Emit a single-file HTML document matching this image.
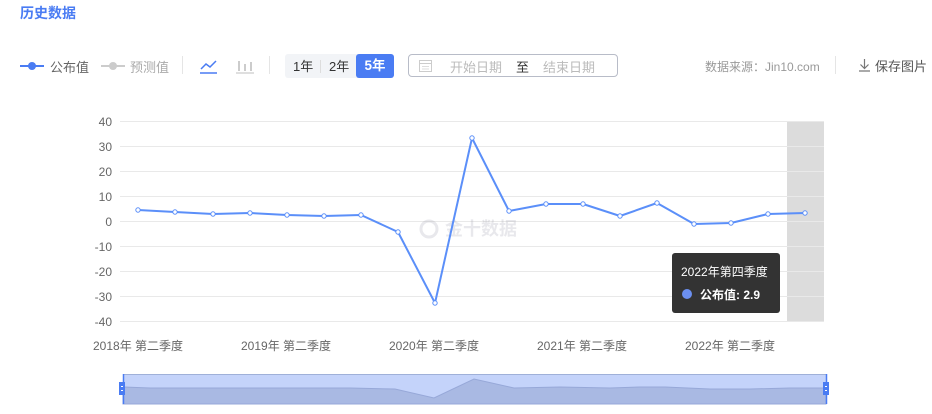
<!DOCTYPE html>
<html><head><meta charset="utf-8">
<style>
*{margin:0;padding:0;box-sizing:border-box}
body{width:932px;height:414px;background:#fff;font-family:"Liberation Sans","Noto Sans CJK SC",sans-serif;position:relative;overflow:hidden;color:#333}
.a{position:absolute;white-space:nowrap}
</style></head><body>
<div class="a" style="left:20px;top:3px;font-size:14px;font-weight:bold;color:#4a7cf3">历史数据</div>

<svg class="a" style="left:20px;top:60px" width="24" height="12"><line x1="0" y1="6" x2="24" y2="6" stroke="#4a7cf3" stroke-width="2"/><circle cx="12" cy="6" r="4" fill="#4a7cf3"/></svg>
<div class="a" style="left:50px;top:57px;font-size:13px;color:#666">公布值</div>
<svg class="a" style="left:101px;top:60px" width="24" height="12"><line x1="0" y1="6" x2="24" y2="6" stroke="#ccc" stroke-width="2"/><circle cx="12" cy="6" r="4" fill="#ccc"/></svg>
<div class="a" style="left:130px;top:57px;font-size:13px;color:#aaa">预测值</div>
<div class="a" style="left:182px;top:56px;width:1px;height:18px;background:#e5e5e5"></div>
<svg class="a" style="left:200px;top:58px" width="18" height="16"><polyline points="1,11 6,6 10,9 16,3" fill="none" stroke="#4a7cf3" stroke-width="1.5"/><line x1="0" y1="15" x2="17" y2="15" stroke="#4a7cf3" stroke-width="1.5"/></svg>
<svg class="a" style="left:236px;top:58px" width="18" height="16"><g stroke="#ccc" stroke-width="2"><line x1="3" y1="3" x2="3" y2="13"/><line x1="9" y1="6" x2="9" y2="13"/><line x1="15" y1="4" x2="15" y2="13"/></g><line x1="0" y1="15" x2="18" y2="15" stroke="#ccc" stroke-width="1.2"/></svg>
<div class="a" style="left:269px;top:56px;width:1px;height:18px;background:#e5e5e5"></div>

<div class="a" style="left:285px;top:54px;width:109px;height:24px;background:#f2f4f7;border-radius:3px"></div>
<div class="a" style="left:293px;top:56px;font-size:13px;color:#333">1年</div>
<div class="a" style="left:320px;top:60px;width:1px;height:13px;background:#ddd"></div>
<div class="a" style="left:329px;top:56px;font-size:13px;color:#333">2年</div>
<div class="a" style="left:356px;top:54px;width:38px;height:24px;background:#4a7cf3;border-radius:3px;color:#fff;font-size:13.5px;font-weight:bold;text-align:center;line-height:24px">5年</div>

<div class="a" style="left:408px;top:54px;width:210px;height:23px;border:1px solid #b8bcc8;border-radius:4px"></div>
<svg class="a" style="left:419px;top:59px" width="13" height="13"><rect x="0.5" y="1.5" width="12" height="11" fill="none" stroke="#ccc"/><line x1="0.5" y1="4.5" x2="12.5" y2="4.5" stroke="#ccc"/><g stroke="#ddd"><line x1="3" y1="7.5" x2="10" y2="7.5"/><line x1="3" y1="10" x2="10" y2="10"/></g></svg>
<div class="a" style="left:450px;top:57px;font-size:13px;color:#bbb">开始日期</div>
<div class="a" style="left:516px;top:57px;font-size:13px;color:#333">至</div>
<div class="a" style="left:543px;top:57px;font-size:13px;color:#bbb">结束日期</div>

<div class="a" style="left:705px;top:58px;font-size:12px;color:#999">数据来源：Jin10.com</div>
<div class="a" style="left:835px;top:56px;width:1px;height:18px;background:#e5e5e5"></div>
<svg class="a" style="left:858px;top:58px" width="13" height="14"><path d="M6.5 1V10.5M2.5 6.5L6.5 10.5L10.5 6.5M1 13H12" fill="none" stroke="#777" stroke-width="1.2"/></svg>
<div class="a" style="left:875px;top:56px;font-size:13px;color:#555">保存图片</div>

<svg class="a" style="left:0;top:0" width="932" height="414">
<rect x="787" y="121" width="37" height="200" fill="#dcdcdc"/>
<g stroke="#e9e9e9" stroke-width="1">
<line x1="120" y1="121.5" x2="824" y2="121.5"/><line x1="120" y1="146.5" x2="824" y2="146.5"/><line x1="120" y1="171.5" x2="824" y2="171.5"/><line x1="120" y1="196.5" x2="824" y2="196.5"/><line x1="120" y1="221.5" x2="824" y2="221.5"/><line x1="120" y1="246.5" x2="824" y2="246.5"/><line x1="120" y1="271.5" x2="824" y2="271.5"/><line x1="120" y1="296.5" x2="824" y2="296.5"/><line x1="120" y1="321.5" x2="824" y2="321.5"/>
</g>
<g font-size="12" fill="#666" text-anchor="end" font-family="Liberation Sans,sans-serif">
<text x="112" y="126">40</text><text x="112" y="151">30</text><text x="112" y="176">20</text><text x="112" y="201">10</text><text x="112" y="226">0</text><text x="112" y="251">-10</text><text x="112" y="276">-20</text><text x="112" y="301">-30</text><text x="112" y="326">-40</text>
</g>
<g font-size="12" fill="#666" font-family="Liberation Sans,Noto Sans CJK SC,sans-serif">
<text x="93" y="350">2018年 第二季度</text><text x="241" y="350">2019年 第二季度</text><text x="389" y="350">2020年 第二季度</text><text x="537" y="350">2021年 第二季度</text><text x="685" y="350">2022年 第二季度</text>
</g>
<g opacity="0.22">
<circle cx="429" cy="229" r="8" fill="none" stroke="#99a" stroke-width="3"/>
<text x="445" y="235" font-size="18" font-weight="bold" fill="#99a" font-family="Noto Sans CJK SC,sans-serif">金十数据</text>
</g>
<polyline fill="none" stroke="#5b8ff9" stroke-width="2" stroke-linejoin="round" points="138,210 175,212 213,214 250,213 287,215 324,216 361,215 398,232 435,303 472,138 509,211 546,204 583,204 620,216 657,203 694,224 731,223 768,214 805,213"/>
<g fill="#fff" stroke="#5b8ff9" stroke-width="1">
<circle cx="138" cy="210" r="2.2"/><circle cx="175" cy="212" r="2.2"/><circle cx="213" cy="214" r="2.2"/><circle cx="250" cy="213" r="2.2"/><circle cx="287" cy="215" r="2.2"/><circle cx="324" cy="216" r="2.2"/><circle cx="361" cy="215" r="2.2"/><circle cx="398" cy="232" r="2.2"/><circle cx="435" cy="303" r="2.2"/><circle cx="472" cy="138" r="2.2"/><circle cx="509" cy="211" r="2.2"/><circle cx="546" cy="204" r="2.2"/><circle cx="583" cy="204" r="2.2"/><circle cx="620" cy="216" r="2.2"/><circle cx="657" cy="203" r="2.2"/><circle cx="694" cy="224" r="2.2"/><circle cx="731" cy="223" r="2.2"/><circle cx="768" cy="214" r="2.2"/><circle cx="805" cy="213" r="2.2"/>
</g>
<rect x="672" y="253" width="108" height="60" rx="3" fill="#333"/>
<text x="681" y="276" font-size="12" fill="#fff" font-family="Liberation Sans,Noto Sans CJK SC,sans-serif">2022年第四季度</text>
<circle cx="687" cy="294" r="5" fill="#6b8ff0"/>
<text x="700" y="299" font-size="12" fill="#fff" font-weight="bold" font-family="Liberation Sans,Noto Sans CJK SC,sans-serif">公布值: 2.9</text>

<rect x="123" y="374" width="703" height="30" fill="#c4d3fa"/>
<path d="M123 387 L150 388 L200 388 L250 388 L300 388 L350 388 L395 389 L434 398 L474 379 L514 388 L560 387 L610 388 L640 387 L665 387 L710 389 L750 389 L790 388 L826 388 L826 404 L123 404Z" fill="#a9b9e3" stroke="#97a8d8" stroke-width="1"/>
<line x1="123" y1="374.5" x2="826" y2="374.5" stroke="#9fb0d8"/>
<line x1="123.5" y1="374" x2="123.5" y2="404" stroke="#4a7cf3" stroke-width="1.5"/>
<line x1="826.5" y1="374" x2="826.5" y2="404" stroke="#4a7cf3" stroke-width="1.5"/>
<rect x="119" y="382" width="6" height="13" fill="#4a7cf3"/>
<rect x="823" y="382" width="6" height="13" fill="#4a7cf3"/>
<g stroke="#fff"><line x1="121" y1="386.5" x2="123" y2="386.5"/><line x1="121" y1="390.5" x2="123" y2="390.5"/><line x1="825" y1="386.5" x2="827" y2="386.5"/><line x1="825" y1="390.5" x2="827" y2="390.5"/></g>
</svg>
</body></html>
